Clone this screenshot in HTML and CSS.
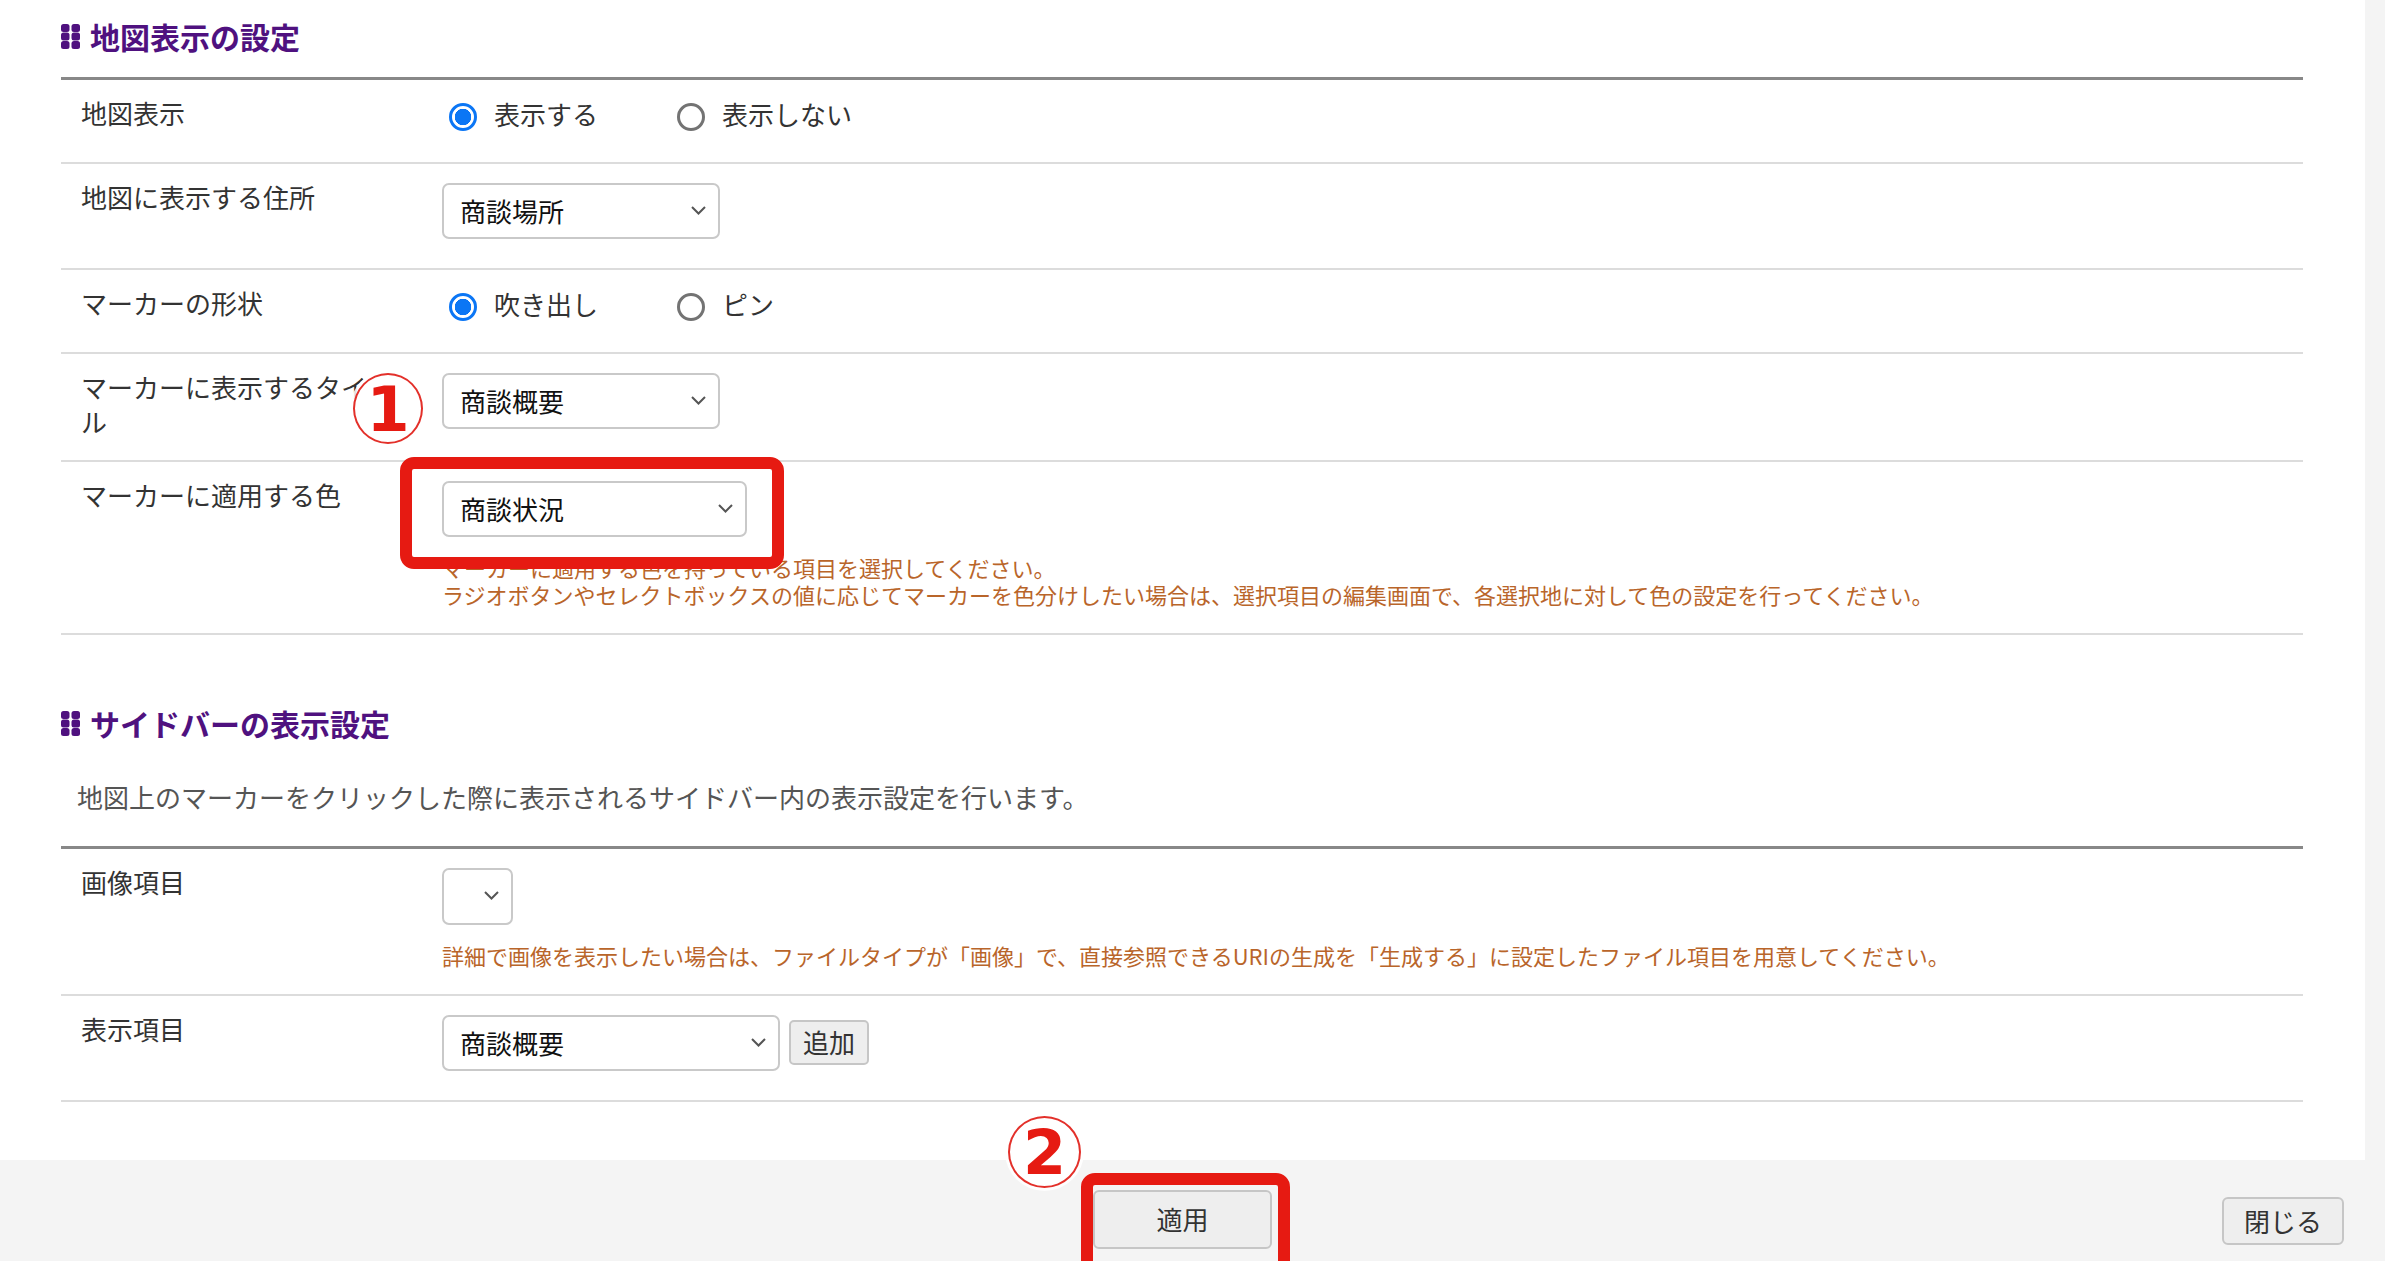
FILE: index.html
```html
<!DOCTYPE html>
<html lang="ja">
<head>
  <meta charset="UTF-8">
  <meta name="viewport" content="width=device-width, initial-scale=1.0">
  <title>地図表示の設定</title>
  <link rel="stylesheet" href="styles.css">
</head>
<body>

<div class="page">
  <div class="panel">
    <div class="content">

      <section class="section">
        <h2 class="section-title">
          <svg class="title-icon" width="19" height="25" viewBox="0 0 19 25">
            <rect x="0" y="0" width="8.5" height="8" rx="2.5"/>
            <rect x="10.5" y="0" width="8.5" height="8" rx="2.5"/>
            <rect x="0" y="8.5" width="8.5" height="8" rx="2.5"/>
            <rect x="10.5" y="8.5" width="8.5" height="8" rx="2.5"/>
            <rect x="0" y="17" width="8.5" height="8" rx="2.5"/>
            <rect x="10.5" y="17" width="8.5" height="8" rx="2.5"/>
          </svg>
          地図表示の設定
        </h2>

        <div class="form-table">
          <div class="form-row">
            <div class="form-label">地図表示</div>
            <div class="form-field">
              <div class="radio-group">
                <label class="radio"><input type="radio" name="mapShow" checked><span>表示する</span></label>
                <label class="radio"><input type="radio" name="mapShow"><span>表示しない</span></label>
              </div>
            </div>
          </div>

          <div class="form-row">
            <div class="form-label">地図に表示する住所</div>
            <div class="form-field">
              <div class="select select-md">
                <span>商談場所</span>
                <svg class="chevron" width="15" height="9" viewBox="0 0 15 9"><polyline points="1,1 7.5,7.5 14,1"/></svg>
              </div>
            </div>
          </div>

          <div class="form-row">
            <div class="form-label">マーカーの形状</div>
            <div class="form-field">
              <div class="radio-group">
                <label class="radio"><input type="radio" name="markerShape" checked><span>吹き出し</span></label>
                <label class="radio"><input type="radio" name="markerShape"><span>ピン</span></label>
              </div>
            </div>
          </div>

          <div class="form-row">
            <div class="form-label">マーカーに表示するタイトル</div>
            <div class="form-field">
              <div class="select select-md">
                <span>商談概要</span>
                <svg class="chevron" width="15" height="9" viewBox="0 0 15 9"><polyline points="1,1 7.5,7.5 14,1"/></svg>
              </div>
            </div>
            <div class="mark mark-1">1</div>
          </div>

          <div class="form-row">
            <div class="form-label">マーカーに適用する色</div>
            <div class="form-field has-note">
              <div class="select select-status">
                <span>商談状況</span>
                <svg class="chevron" width="15" height="9" viewBox="0 0 15 9"><polyline points="1,1 7.5,7.5 14,1"/></svg>
              </div>
              <p class="note">マーカーに適用する色を持っている項目を選択してください。<br>ラジオボタンやセレクトボックスの値に応じてマーカーを色分けしたい場合は、選択項目の編集画面で、各選択地に対して色の設定を行ってください。</p>
              <div class="highlight highlight-status"></div>
            </div>
          </div>
        </div>
      </section>

      <section class="section section-sidebar">
        <h2 class="section-title">
          <svg class="title-icon" width="19" height="25" viewBox="0 0 19 25">
            <rect x="0" y="0" width="8.5" height="8" rx="2.5"/>
            <rect x="10.5" y="0" width="8.5" height="8" rx="2.5"/>
            <rect x="0" y="8.5" width="8.5" height="8" rx="2.5"/>
            <rect x="10.5" y="8.5" width="8.5" height="8" rx="2.5"/>
            <rect x="0" y="17" width="8.5" height="8" rx="2.5"/>
            <rect x="10.5" y="17" width="8.5" height="8" rx="2.5"/>
          </svg>
          サイドバーの表示設定
        </h2>
        <p class="section-desc">地図上のマーカーをクリックした際に表示されるサイドバー内の表示設定を行います。</p>

        <div class="form-table">
          <div class="form-row">
            <div class="form-label">画像項目</div>
            <div class="form-field has-note">
              <div class="select select-xs">
                <svg class="chevron" width="15" height="9" viewBox="0 0 15 9"><polyline points="1,1 7.5,7.5 14,1"/></svg>
              </div>
              <p class="note">詳細で画像を表示したい場合は、ファイルタイプが「画像」で、直接参照できるURIの生成を「生成する」に設定したファイル項目を用意してください。</p>
            </div>
          </div>

          <div class="form-row">
            <div class="form-label">表示項目</div>
            <div class="form-field field-inline">
              <div class="select select-lg">
                <span>商談概要</span>
                <svg class="chevron" width="15" height="9" viewBox="0 0 15 9"><polyline points="1,1 7.5,7.5 14,1"/></svg>
              </div>
              <button class="btn btn-add" type="button">追加</button>
            </div>
          </div>
        </div>
      </section>

    </div>

    <div class="footer">
      <span></span>
      <span class="apply-wrap">
        <button class="btn btn-apply" type="button">適用</button>
        <span class="mark mark-2">2</span>
        <span class="highlight highlight-apply"></span>
      </span>
      <button class="btn btn-close" type="button">閉じる</button>
    </div>
  </div>
  <div class="side-strip"></div>
</div>

</body>
</html>
```

FILE: styles.css
```css
html, body {
  margin: 0;
  padding: 0;
  background: #fff;
}

body {
  font-family: "Noto Sans CJK JP", "Noto Sans", sans-serif;
  color: #333;
  overflow: hidden;
}

.page {
  display: flex;
  min-height: 100vh;
}

.panel {
  width: 2365px;
  flex: 0 0 2365px;
  display: flex;
  flex-direction: column;
  background: #fff;
}

.side-strip {
  width: 20px;
  flex: 0 0 20px;
  background: #f4f4f4;
}

.content {
  padding: 16px 62px 58px 61px;
}

.section-sidebar {
  margin-top: 68px;
}

.section-title {
  display: flex;
  align-items: center;
  gap: 10px;
  margin: 0 0 21px;
  height: 40px;
  font-size: 30px;
  line-height: 40px;
  font-weight: 700;
  color: #4f117f;
}

.title-icon {
  fill: #4f117f;
  flex: none;
}

.section-desc {
  margin: 0;
  padding: 14px 0 30px 16px;
  font-size: 26px;
  line-height: 38px;
  color: #555;
}

.form-table {
  border-top: 3px solid #888;
}

.form-row {
  position: relative;
  display: flex;
  border-bottom: 2px solid #dcdcdc;
}

.form-label {
  flex: 0 0 381px;
  box-sizing: border-box;
  padding: 15px 36px 21px 20px;
  font-size: 26px;
  line-height: 35px;
  color: #333;
}

.form-field {
  position: relative;
  flex: 1;
  padding: 19px 0 29px;
}

.form-field.has-note {
  padding-bottom: 25px;
}

.field-inline {
  display: flex;
  align-items: flex-start;
  gap: 9px;
}

.radio-group {
  display: flex;
  align-items: center;
  height: 34px;
}

.radio {
  display: inline-flex;
  align-items: center;
  margin-right: 72px;
  font-size: 26px;
  line-height: 34px;
  color: #333;
}

.radio span {
  margin-top: -4px;
}

.radio input {
  appearance: none;
  -webkit-appearance: none;
  box-sizing: border-box;
  width: 28px;
  height: 28px;
  margin: 2px 17px 0 7px;
  border: 3px solid #737373;
  border-radius: 50%;
  background: #fff;
}

.radio input:checked {
  border-color: #0b76f5;
  background: radial-gradient(circle, #0b76f5 0 8px, #fff 8.5px);
}

.select {
  box-sizing: border-box;
  display: flex;
  align-items: center;
  justify-content: space-between;
  height: 56px;
  padding: 0 12px 2px 16px;
  border: 2px solid #c9c9c9;
  border-radius: 7px;
  background: #fff;
  font-size: 26px;
  color: #111;
}

.select-md { width: 278px; }
.select-status { width: 305px; }
.select-lg { width: 338px; }
.select-xs { width: 71px; height: 57px; }

.chevron {
  margin-left: auto;
  fill: none;
  stroke: #555;
  stroke-width: 2;
}

.note {
  margin: 17px 0 0;
  font-size: 22px;
  line-height: 27px;
  color: #b9652a;
}

.btn {
  box-sizing: border-box;
  display: inline-flex;
  align-items: center;
  justify-content: center;
  border: 2px solid #c6c6c6;
  border-radius: 6px;
  background: #eeeeee;
  font-family: "Noto Sans CJK JP", "Noto Sans", sans-serif;
  font-size: 26px;
  color: #333;
  padding: 0 0 2px;
}

.btn-add {
  width: 80px;
  height: 45px;
  margin-top: 5px;
  border-radius: 5px;
}

.footer {
  display: grid;
  grid-template-columns: 1fr auto 1fr;
  align-items: center;
  padding: 30px 21px 13px;
  background: #f4f4f4;
}

.apply-wrap {
  position: relative;
  display: inline-flex;
}

.btn-apply {
  width: 179px;
  height: 59px;
}

.btn-close {
  justify-self: end;
  width: 122px;
  height: 48px;
  margin-top: 3px;
}

.highlight {
  position: absolute;
  box-sizing: border-box;
  border: 12px solid #e61a12;
  border-radius: 14px;
  z-index: 2;
  pointer-events: none;
}

.highlight-status {
  left: -42px;
  top: -5px;
  width: 384px;
  height: 112px;
}

.highlight-apply {
  left: -12px;
  top: -17px;
  width: 209px;
  height: 112px;
}

.mark {
  position: absolute;
  box-sizing: border-box;
  display: flex;
  align-items: center;
  justify-content: center;
  border: 2px solid #e3302a;
  border-radius: 50%;
  background: #fff;
  box-shadow: 0 0 0 3px rgba(255, 255, 255, 0.85);
  font-family: "DejaVu Sans", sans-serif;
  font-weight: 700;
  color: #e61a12;
  line-height: 1;
  padding-top: 2px;
  z-index: 3;
}

.mark-1 {
  left: 292px;
  top: 19px;
  width: 70px;
  height: 71px;
  font-size: 62px;
}

.mark-2 {
  left: -85px;
  top: -74px;
  width: 73px;
  height: 72px;
  font-size: 62px;
}
```
